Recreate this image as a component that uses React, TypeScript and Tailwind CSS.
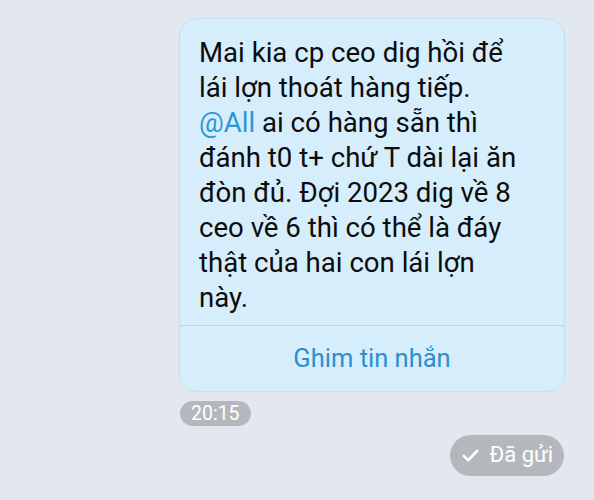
import React from "react";

export default function App() {
  const font = { fontFamily: "Roboto, 'Noto Sans', sans-serif" };
  return (
    <div className="w-[594px] h-[500px] bg-[#e3e8f0] overflow-hidden relative" style={font}>
      <div className="flex flex-col items-end pr-[29px] pt-[18px]">
        <div className="w-[386px] rounded-[18px] bg-[#d6eefb] border border-[#c4dff0] flex flex-col">
          <div className="pl-[19px] pr-[4px] pt-[16px] pb-[10px] text-[27.6px] leading-[35px] text-[#0c0c0c] whitespace-nowrap">
            Mai kia cp ceo dig hồi để<br />
            lái lợn thoát hàng tiếp.<br />
            <span className="text-[#2c96d6]">@All</span> ai có hàng sẵn thì<br />
            đánh t0 t+ chứ T dài lại ăn<br />
            đòn đủ. Đợi 2023 dig về 8<br />
            ceo về 6 thì có thể là đáy<br />
            thật của hai con lái lợn<br />
            này.
          </div>
          <div className="border-t border-[#b8d6e8] h-[66px] flex items-center justify-center text-[25.5px] text-[#2b8fcf]">
            Ghim tin nhắn
          </div>
        </div>
      </div>
      <div className="pl-[180px] pt-[9px]">
        <span className="inline-flex items-center h-[25px] px-[11px] rounded-full bg-[#b4b8bd] text-white text-[19.5px] leading-none">
          20:15
        </span>
      </div>
      <div className="flex justify-end pr-[30px] pt-[8px]">
        <span className="inline-flex items-center gap-[10px] h-[41px] pl-[11px] pr-[11px] rounded-full bg-[#b4b8bd] text-white text-[22px] leading-none">
          <svg width="19" height="19" viewBox="0 0 24 24" fill="none" stroke="white" strokeWidth="3.2" strokeLinecap="round" strokeLinejoin="round">
            <path d="M3.5 12.5l5.5 5.5L20.5 6" />
          </svg>
          Đã gửi
        </span>
      </div>
    </div>
  );
}
